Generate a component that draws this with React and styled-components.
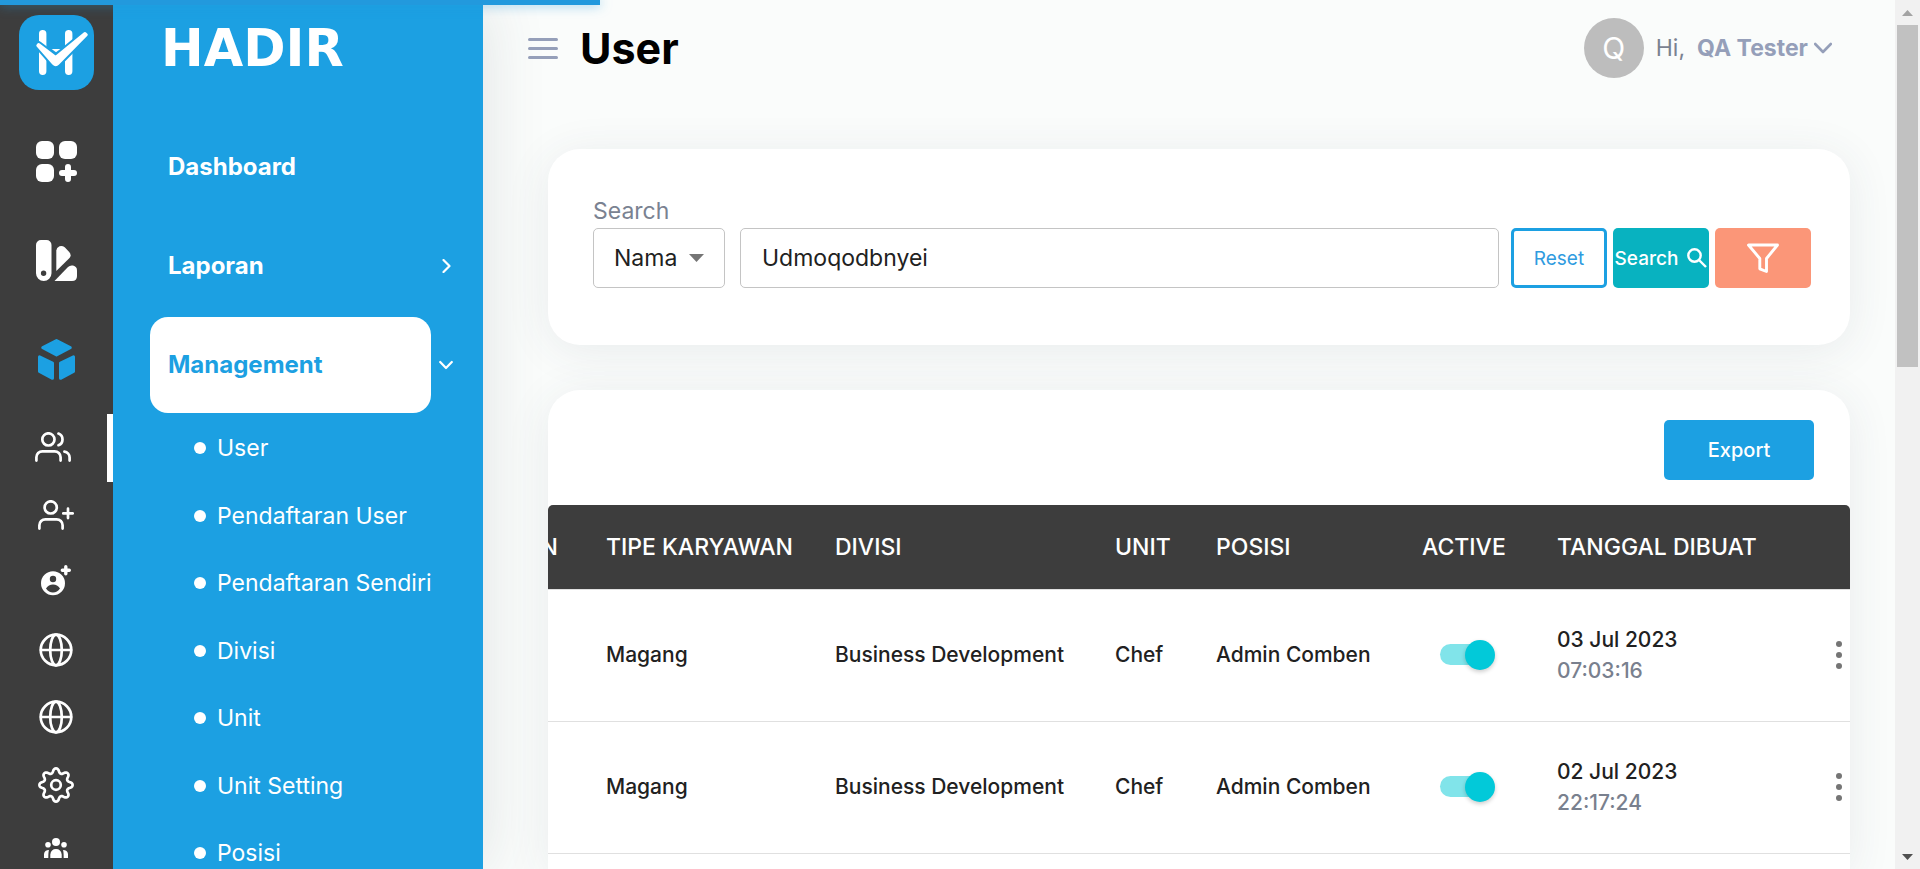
import React from "react";
import styled, { createGlobalStyle, css } from "styled-components";

const blue = "#1ca0e2";
const dark = "#3d3d3d";

const GlobalStyle = createGlobalStyle`
  *, *::before, *::after { box-sizing: border-box; }
  body {
    margin: 0;
    overflow: hidden;
    background: #fafcfb;
    color: #212121;
    font-family: Inter, "Liberation Sans", sans-serif;
    font-size: 23px;
  }
  button, input, select { font-family: inherit; font-size: inherit; color: inherit; }
  button { border: 0; padding: 0; background: none; cursor: pointer; }
  a { color: inherit; text-decoration: none; }
  svg { display: block; flex: none; }
`;

const Shell = styled.div`
  display: flex;
  height: 100vh;
  overflow: hidden;
`;

const Progress = styled.div`
  position: fixed;
  z-index: 5;
  top: 0;
  left: 0;
  height: 5px;
  background: #2299dd;
  box-shadow: 0 0 12px rgba(34, 153, 221, 0.6);
`;

const Rail = styled.nav`
  position: relative;
  z-index: 1;
  flex: none;
  width: 113px;
  overflow: hidden;
  background: ${dark};
  color: #fff;
`;

const RailLogo = styled.a`
  display: flex;
  justify-content: center;
  height: 112px;
  padding-top: 15px;
`;

const RailLink = styled.a`
  display: flex;
  align-items: center;
  justify-content: center;
  height: 99px;
  color: ${(p) => (p.$active ? blue : "#fff")};
`;

const subGrid = css`
  display: grid;
  grid-auto-rows: 68px 67px;
  margin: 0;
  padding: 0;
  list-style: none;
`;

const RailSub = styled.div`
  ${subGrid}
  padding-top: 5px;
`;

const RailSubLink = styled.a`
  display: flex;
  align-items: center;
  justify-content: center;
  border: solid ${(p) => (p.$active ? "#fff" : "transparent")};
  border-width: 0 6px 0 0;
  padding: 0 0 2px 4px;
`;

const Sidebar = styled.aside`
  flex: none;
  width: 370px;
  overflow: hidden;
  background: ${blue};
  color: #fff;
  box-shadow: 0 0 60px rgba(60, 70, 80, 0.14);
`;

const Brand = styled.div`
  height: 119px;
  padding: 18px 0 0 48px;
  font-family: "DejaVu Sans", sans-serif;
  font-size: 51px;
  font-weight: 700;
  line-height: 62px;
`;

const Menu = styled.ul`
  margin: 0;
  padding: 0 0 0 37px;
  list-style: none;
`;

const MenuItem = styled.li`
  display: flex;
  align-items: center;
  height: 99px;
  padding-bottom: 3px;
`;

const MenuLink = styled.a`
  display: flex;
  align-items: center;
  width: 281px;
  height: 96px;
  margin-right: 8px;
  padding: 0 0 2px 18px;
  border-radius: 18px;
  font-size: 24px;
  font-weight: 700;
  background: ${(p) => (p.$active ? "#fff" : "transparent")};
  color: ${(p) => (p.$active ? blue : "#fff")};
`;

const SubMenu = styled.ul`
  ${subGrid}
  margin-top: -2px;
`;

const SubMenuLink = styled.a`
  display: flex;
  align-items: center;
  height: 100%;
  padding-left: 81px;
  gap: 11px;

  &::before {
    content: "";
    width: 12px;
    height: 12px;
    border-radius: 50%;
    background: #fff;
  }
`;

const Main = styled.main`
  display: flex;
  flex-direction: column;
  flex: 1;
  min-width: 0;
  padding: 0 45px 0 65px;
`;

const Header = styled.header`
  display: flex;
  align-items: center;
  flex: none;
  height: 96px;
  margin: 0 18px 53px -20px;
`;

const MenuToggle = styled.button`
  display: flex;
  flex-direction: column;
  gap: 6px;
  width: 30px;
  margin-right: 22px;

  span {
    height: 3px;
    border-radius: 2px;
    background: #959fb9;
  }
`;

const Title = styled.h1`
  flex: 1;
  margin: 0;
  color: #000;
  font-size: 43px;
  font-weight: 700;
`;

const Avatar = styled.span`
  display: grid;
  place-items: center;
  width: 60px;
  height: 60px;
  margin-right: 12px;
  border-radius: 50%;
  background: #bdbdbd;
  color: #fff;
  font-size: 30px;
`;

const Account = styled.button`
  display: flex;
  align-items: center;
  color: #959fb9;

  span { color: #7a8291; }

  strong {
    margin: 0 6px 0 12px;
    font-weight: 700;
  }
`;

const Card = styled.section`
  flex: ${(p) => (p.$grow ? "1 0 auto" : "none")};
  margin-bottom: ${(p) => (p.$grow ? 0 : 45)}px;
  border-radius: ${(p) => (p.$grow ? "32px 32px 0 0" : "32px")};
  background: #fff;
  box-shadow: 0 6px 45px rgba(50, 70, 90, 0.09);
`;

const SearchForm = styled.form`
  display: flex;
  flex-direction: column;
  height: 196px;
  padding: 46px 39px 0 45px;
`;

const SearchLabel = styled.label`
  height: 33px;
  color: #7a8291;
  line-height: 32px;
`;

const SearchRow = styled.div`
  display: flex;
  gap: 6px;
  height: 60px;
`;

const SelectBox = styled.span`
  display: flex;
  align-items: center;
  width: 132px;
  margin-right: 9px;
  padding-right: 20px;
  border: 1px solid #c4c4c4;
  border-radius: 5px;

  select {
    flex: 1;
    min-width: 0;
    height: 100%;
    padding: 0 0 0 20px;
    border: 0;
    appearance: none;
    background: none;
  }
`;

const TextBox = styled.input`
  flex: 1;
  min-width: 0;
  margin-right: 6px;
  padding: 0 21px;
  border: 1px solid #c4c4c4;
  border-radius: 5px;
  background: #fff;
`;

const ActionButton = styled.button`
  display: flex;
  align-items: center;
  justify-content: center;
  gap: 9px;
  width: ${(p) => (p.$wide ? 150 : 96)}px;
  height: 60px;
  border: ${(p) => (p.$outline ? `3px solid ${blue}` : 0)};
  border-radius: 5px;
  background: ${(p) => p.$fill || "#fff"};
  color: ${(p) => (p.$outline ? "#2f9be0" : "#fff")};
  font-size: ${(p) => (p.$wide ? 20 : 19)}px;
  font-weight: ${(p) => (p.$outline ? 400 : 500)};
`;

const Toolbar = styled.div`
  display: flex;
  justify-content: flex-end;
  height: 115px;
  padding: 30px 36px 0 0;
`;

const Table = styled.table`
  width: 100%;
  table-layout: fixed;
  border-collapse: separate;
  border-spacing: 0;
  font-weight: 500;
`;

const HeadCell = styled.th`
  height: 85px;
  padding: 0;
  overflow: hidden;
  border-bottom: 1px solid #e0e0e0;
  background: ${dark};
  color: #fff;
  font-size: 23px;
  font-weight: 500;
  text-align: left;
  white-space: nowrap;

  &:first-child { border-top-left-radius: 5px; }
  &:last-child { border-top-right-radius: 5px; }
`;

const ClippedHead = styled.span`
  display: flex;
  justify-content: flex-end;
  width: 10px;
  overflow: hidden;
`;

const Cell = styled.td`
  height: 132px;
  padding: 0 0 2px;
  border-bottom: 1px solid #e0e0e0;
  font-size: 21px;
  line-height: 31px;
  white-space: nowrap;
`;

const Time = styled.div`
  color: #79808e;
`;

const Switch = styled.input`
  display: grid;
  align-items: center;
  appearance: none;
  width: 55px;
  height: 30px;
  margin: 0 0 0 18px;
  cursor: pointer;

  &::before, &::after {
    content: "";
    grid-area: 1 / 1;
  }

  &::before {
    width: 45px;
    height: 21px;
    border-radius: 11px;
    background: #81e4ea;
  }

  &::after {
    justify-self: end;
    width: 30px;
    height: 30px;
    border-radius: 50%;
    background: #02c9d9;
    box-shadow: 0 2px 4px rgba(0, 0, 0, 0.2);
  }
`;

const MoreButton = styled.button`
  display: grid;
  place-content: center;
  gap: 5px;
  width: 24px;
  height: 36px;

  span {
    width: 6px;
    height: 6px;
    border-radius: 50%;
    background: #757575;
  }
`;

const ScrollTrack = styled.div`
  display: flex;
  flex-direction: column;
  align-items: center;
  flex: none;
  width: 25px;
  background: #f1f1f1;
`;

const ScrollArrow = styled.span`
  display: grid;
  place-items: center;
  height: 25px;
`;

const ScrollThumb = styled.span`
  width: 21px;
  margin-bottom: auto;
  background: #c1c1c1;
`;

const Logo = () => (
  <svg width="75" height="75" viewBox="0 0 75 75">
    <rect width="75" height="75" rx="20" fill={blue} />
    <path d="M23.7 18.7V56.3M49.7 18.7V56.3" stroke="#fff" strokeWidth="7.4" strokeLinecap="round" />
    <path d="M19.500 29.500L36.700 42.500L66 18.500L67.300 19.800L39 48.500Q36.700 50.800 34.500 48.500L18.800 30.500Z" fill={blue} stroke={blue} strokeWidth="7" strokeLinejoin="round" />
    <path d="M32.700 34h8.600l-4.300 3.300z" fill="#fff" />
    <path d="M19.500 29.500L36.700 42.500L66 18.500L67.300 19.800L39 48.500Q36.700 50.800 34.500 48.500L18.800 30.500Z" fill="#fff" stroke="#fff" strokeWidth="3" strokeLinejoin="round" />
  </svg>
);

const GridIcon = () => (
  <svg width="41" height="41" viewBox="0 0 41 41" fill="currentColor">
    <rect width="18" height="18" rx="6" />
    <rect x="23" width="18" height="18" rx="6" />
    <rect y="23" width="18" height="18" rx="6" />
    <path d="M32 26v12M26 32h12" stroke="currentColor" strokeWidth="6" strokeLinecap="round" />
  </svg>
);

const SwatchIcon = () => (
  <svg width="41" height="41" viewBox="0 0 41 41" fill="currentColor">
    <path fillRule="evenodd" d="M5 0h5.500a5 5 0 0 1 5 5v28.200a7.750 7.750 0 0 1-15.500 0V5a5 5 0 0 1 5-5zM7.600 30.600a2.700 2.700 0 1 0 0 5.400a2.700 2.700 0 1 0 0-5.400z" />
    <path d="M20.300 31V10.500Q20.500 7.500 23.500 6.300Q26.300 5.500 28.700 7.300L33 11.700Q36 15 33.500 18z" />
    <path d="M18.500 41L32 27Q34 25 37 25.600Q41 26.500 41 30.500V36Q41 41 36 41z" />
  </svg>
);

const CubeIcon = () => (
  <svg width="37" height="41" viewBox="0 0 37 41" fill="currentColor" stroke="currentColor" strokeWidth="3" strokeLinejoin="round">
    <path d="M18.500 1.600L32.200 8.700L18.500 15.900L4.800 8.700z" />
    <path d="M1.500 17.800L14.500 24.200V39.300L1.500 32.500z" />
    <path d="M35.500 17.800L22.500 24.200V39.300L35.500 32.500z" />
  </svg>
);

const LineIcon = ({ width = 36, height = 30, children }) => (
  <svg width={width} height={height} viewBox={`0 0 ${width} ${height}`} fill="none" stroke="currentColor" strokeWidth="2.700" strokeLinecap="round" strokeLinejoin="round">
    {children}
  </svg>
);

const UsersIcon = () => (
  <LineIcon width={42}>
    <circle cx="13.400" cy="7.400" r="6.100" />
    <path d="M1.400 28.600V25.300a6 6 0 0 1 6-6h12.200a6 6 0 0 1 6 6v3.300M23.500 1.600a6.200 6.200 0 0 1 0 11.600M29.400 19.600a6 6 0 0 1 5.200 6v3" />
  </LineIcon>
);

const UserPlusIcon = () => (
  <LineIcon>
    <circle cx="12.700" cy="7.400" r="6.100" />
    <path d="M1.400 28.600V25.300a6 6 0 0 1 6-6h11.200a6 6 0 0 1 6 6v3.300M30 8.700v9.400M25.300 13.400h9.400" />
  </LineIcon>
);

const AccountPlusIcon = () => (
  <svg width="30" height="34" viewBox="0 0 30 34">
    <path fill="currentColor" fillRule="evenodd" d="M12 6.300a12 12 0 1 0 0 24a12 12 0 1 0 0-24zM12 10.800a3.200 3.200 0 1 1 0 6.400a3.200 3.200 0 1 1 0-6.400zM5 23.500Q7.500 19.500 12 19.500T19 23.500Q16.300 27.500 12 27.500T5 23.500z" />
    <path d="M24.800 1.800v7M21.300 5.300h7" stroke="currentColor" strokeWidth="3.400" strokeLinecap="round" />
  </svg>
);

const GlobeIcon = () => (
  <LineIcon width={34} height={34}>
    <circle cx="17" cy="17" r="15.300" />
    <ellipse cx="17" cy="17" rx="5.800" ry="15.300" />
    <path d="M2 17h30" />
  </LineIcon>
);

const gearPath =
  Array.from({ length: 128 }, (_, i) => {
    const a = (i / 128) * Math.PI * 2;
    const wave = Math.cos(8 * a);
    const r = 14.4 + 2.2 * Math.sign(wave) * Math.pow(Math.abs(wave), 0.7);
    return `${i ? "L" : "M"}${(18 + r * Math.sin(a)).toFixed(2)} ${(18 - r * Math.cos(a)).toFixed(2)}`;
  }).join("") + "Z";

const GearIcon = () => (
  <LineIcon width={36} height={36}>
    <path d={gearPath} />
    <circle cx="18" cy="18" r="4.800" />
  </LineIcon>
);

const TeamIcon = () => (
  <svg width="24" height="28" viewBox="0 0 24 28" fill="currentColor">
    <circle cx="12" cy="4" r="4" />
    <circle cx="4" cy="6.700" r="2.800" />
    <circle cx="20" cy="6.700" r="2.800" />
    <path d="M6.300 20v-3.500Q7 11 12 11t5.700 5.500V20zM0 20v-4Q.5 12 5 12Q4.300 14 4.300 20zM24 20v-4Q23.500 12 19 12Q19.700 14 19.700 20z" />
  </svg>
);

const Chevron = ({ down, width = 14, stroke = 2.2 }) => {
  const h = width / 2;
  return down ? (
    <svg width={width} height={h + 3} viewBox={`0 0 ${width} ${h + 3}`} fill="none" stroke="currentColor" strokeWidth={stroke} strokeLinecap="round" strokeLinejoin="round">
      <path d={`M1.200 2L${h} ${h + 1}L${width - 1.2} 2`} />
    </svg>
  ) : (
    <svg width={width} height={width} viewBox={`0 0 ${width} ${width}`} fill="none" stroke="currentColor" strokeWidth={stroke} strokeLinecap="round" strokeLinejoin="round">
      <path d={`M4.500 1L${h + 3.5} ${h}L4.500 ${width - 1}`} />
    </svg>
  );
};

const Triangle = ({ up, width, height, color }) => (
  <svg width={width} height={height} viewBox="0 0 2 1" preserveAspectRatio="none" fill={color}>
    <path d={up ? "M0 1L1 0L2 1z" : "M0 0H2L1 1z"} />
  </svg>
);

const SearchIcon = () => (
  <svg width="20" height="20" viewBox="0 0 20 20" fill="none" stroke="currentColor" strokeWidth="2.400">
    <circle cx="7.500" cy="7.500" r="6.200" />
    <path d="M12 12l7 7" />
  </svg>
);

const FunnelIcon = () => (
  <svg width="34" height="31" viewBox="0 0 34 31" fill="none" stroke="currentColor" strokeWidth="2.900" strokeLinejoin="round">
    <path d="M2.500 2H31.500L20.500 15.500V28.500L13.800 25.800V15.500z" />
  </svg>
);

const menu = [
  { label: "Dashboard", Icon: GridIcon },
  { label: "Laporan", Icon: SwatchIcon, chevron: true },
  { label: "Management", Icon: CubeIcon, chevron: true, active: true },
];

const submenu = [
  { label: "User", Icon: UsersIcon, active: true },
  { label: "Pendaftaran User", Icon: UserPlusIcon },
  { label: "Pendaftaran Sendiri", Icon: AccountPlusIcon },
  { label: "Divisi", Icon: GlobeIcon },
  { label: "Unit", Icon: GlobeIcon },
  { label: "Unit Setting", Icon: GearIcon },
  { label: "Posisi", Icon: TeamIcon },
];

const columns = [
  { label: "TIPE KARYAWAN", width: 229 },
  { label: "DIVISI", width: 280 },
  { label: "UNIT", width: 101 },
  { label: "POSISI", width: 206 },
  { label: "ACTIVE", width: 135 },
  { label: "TANGGAL DIBUAT" },
];

const users = [
  { type: "Magang", division: "Business Development", unit: "Chef", position: "Admin Comben", date: "03 Jul 2023", time: "07:03:16" },
  { type: "Magang", division: "Business Development", unit: "Chef", position: "Admin Comben", date: "02 Jul 2023", time: "22:17:24" },
];

export default function App() {
  return (
    <Shell>
      <GlobalStyle />
      <Progress style={{ width: "31.25%" }} />

      <Rail aria-label="Shortcuts">
        <RailLogo href="#" aria-label="Hadir home"><Logo /></RailLogo>
        {menu.map(({ label, Icon, active }) => (
          <RailLink key={label} href="#" aria-label={label} $active={active}><Icon /></RailLink>
        ))}
        <RailSub>
          {submenu.map(({ label, Icon, active }) => (
            <RailSubLink key={label} href="#" aria-label={label} $active={active}><Icon /></RailSubLink>
          ))}
        </RailSub>
      </Rail>

      <Sidebar>
        <Brand>HADIR</Brand>
        <Menu>
          {menu.map(({ label, chevron, active }) => (
            <MenuItem key={label}>
              <MenuLink href="#" $active={active}>{label}</MenuLink>
              {chevron && <Chevron down={active} />}
            </MenuItem>
          ))}
        </Menu>
        <SubMenu>
          {submenu.map(({ label }) => (
            <li key={label}><SubMenuLink href="#">{label}</SubMenuLink></li>
          ))}
        </SubMenu>
      </Sidebar>

      <Main>
        <Header>
          <MenuToggle aria-label="Toggle menu"><span /><span /><span /></MenuToggle>
          <Title>User</Title>
          <Avatar>Q</Avatar>
          <Account>
            <span>Hi,</span> <strong>QA Tester</strong>
            <Chevron down width={18} stroke={2.6} />
          </Account>
        </Header>

        <Card>
          <SearchForm onSubmit={(e) => e.preventDefault()}>
            <SearchLabel htmlFor="keyword">Search</SearchLabel>
            <SearchRow>
              <SelectBox>
                <select aria-label="Search by" defaultValue="Nama"><option>Nama</option></select>
                <Triangle width={15} height={8} color="#757575" />
              </SelectBox>
              <TextBox id="keyword" type="text" defaultValue="Udmoqodbnyei" />
              <ActionButton type="reset" $outline>Reset</ActionButton>
              <ActionButton type="submit" $fill="#08b2c0">Search<SearchIcon /></ActionButton>
              <ActionButton type="button" $fill="#fb9678" aria-label="Filter"><FunnelIcon /></ActionButton>
            </SearchRow>
          </SearchForm>
        </Card>

        <Card $grow>
          <Toolbar>
            <ActionButton type="button" $wide $fill={blue}>Export</ActionButton>
          </Toolbar>
          <Table>
            <colgroup>
              <col width="58" />
              {columns.map((c) => <col key={c.label} width={c.width} />)}
              <col width="23" />
            </colgroup>
            <thead>
              <tr>
                <HeadCell><ClippedHead>N</ClippedHead></HeadCell>
                {columns.map((c) => <HeadCell key={c.label}>{c.label}</HeadCell>)}
                <HeadCell aria-label="Actions" />
              </tr>
            </thead>
            <tbody>
              {users.map((u) => (
                <tr key={u.time}>
                  <Cell />
                  <Cell>{u.type}</Cell>
                  <Cell>{u.division}</Cell>
                  <Cell>{u.unit}</Cell>
                  <Cell>{u.position}</Cell>
                  <Cell><Switch type="checkbox" role="switch" defaultChecked aria-label="Active" /></Cell>
                  <Cell>{u.date}<Time>{u.time}</Time></Cell>
                  <Cell><MoreButton aria-label="More actions"><span /><span /><span /></MoreButton></Cell>
                </tr>
              ))}
            </tbody>
          </Table>
        </Card>
      </Main>

      <ScrollTrack aria-hidden="true">
        <ScrollArrow><Triangle up width={11} height={6} color="#a3a3a3" /></ScrollArrow>
        <ScrollThumb style={{ height: "342px" }} />
        <ScrollArrow><Triangle width={11} height={6} color="#505050" /></ScrollArrow>
      </ScrollTrack>
    </Shell>
  );
}
